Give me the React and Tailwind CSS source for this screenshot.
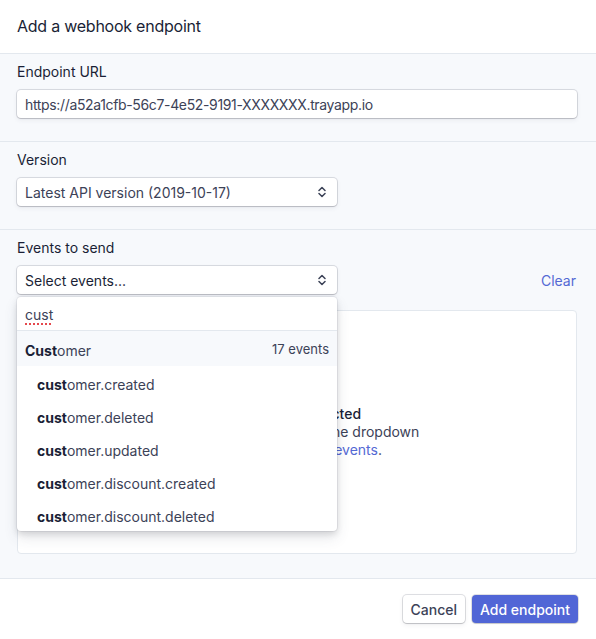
import React from "react";

const Chevrons = () => (
  <svg width="8" height="12" viewBox="0 0 8 12" fill="none" stroke="#3c4257" strokeWidth="1.5" strokeLinecap="round" strokeLinejoin="round">
    <path d="M1 4.5 L4 1.5 L7 4.5" />
    <path d="M1 7.5 L4 10.5 L7 7.5" />
  </svg>
);

const fieldShadow = "shadow-[0_0_0_1px_rgba(60,66,87,0.16),0_1px_1px_rgba(0,0,0,0.12),0_2px_5px_rgba(60,66,87,0.08)]";

export default function App() {
  const items = [
    "omer.created",
    "omer.deleted",
    "omer.updated",
    "omer.discount.created",
    "omer.discount.deleted",
  ];
  return (
    <div className="w-[596px] h-[639px] bg-white text-[#1a1f36] text-[14px] overflow-hidden relative" style={{ fontFamily: "Inter, 'Noto Sans', sans-serif" }}>
      <div className="h-[54px] border-b border-[#e3e8ee] flex items-center px-[17px]">
        <span className="text-[16px] leading-5 text-[#1a1f36] mb-[2px] tracking-[-0.015em]">Add a webhook endpoint</span>
      </div>

      <div className="bg-[#f7f9fc] border-b border-[#e3e8ee] pt-2 pb-[23px] px-[17px]">
        <div className="h-5 leading-5 text-[#1a1f36] mb-2">Endpoint URL</div>
        <div className={`h-7 w-[560px] bg-white rounded-[4px] ${fieldShadow} flex items-center px-2 text-[#3c4257] tracking-[-0.025em]`}>
          https://a52a1cfb-56c7-4e52-9191-XXXXXXX.trayapp.io
        </div>
      </div>

      <div className="bg-[#f7f9fc] border-b border-[#e3e8ee] pt-2 pb-[23px] px-[17px]">
        <div className="h-5 leading-5 text-[#1a1f36] mb-2">Version</div>
        <div className={`h-7 w-[320px] bg-white rounded-[4px] ${fieldShadow} flex items-center justify-between pl-2 pr-[11px] text-[#3c4257]`}>
          <span>Latest API version (2019-10-17)</span>
          <Chevrons />
        </div>
      </div>

      <div className="bg-[#f7f9fc] border-b border-[#e3e8ee] pt-2 pb-6 px-[17px] relative">
        <div className="h-5 leading-5 text-[#1a1f36] mb-2">Events to send</div>
        <div className="flex items-center justify-between w-[560px]">
          <div className={`h-7 w-[320px] bg-white rounded-[4px] ${fieldShadow} flex items-center justify-between pl-2 pr-[11px] text-[#1a1f36]`}>
            <span>Select events...</span>
            <Chevrons />
          </div>
          <span className="text-[#5469d4] mr-px">Clear</span>
        </div>
        <div className="mt-4 h-[244px] w-[560px] bg-white border border-[#e3e8ee] rounded-[4px] flex flex-col items-center justify-center text-[#3c4257] leading-[18px] text-center">
          <div className="font-medium text-[#1a1f36]">No events selected</div>
          <div>Select the events from the dropdown</div>
          <div>
            or subscribe to all <span className="text-[#5469d4]">events</span>.
          </div>
        </div>

        <div className="absolute left-[17px] top-[67px] w-[320px] bg-white rounded-[4px] shadow-[0_0_0_1px_rgba(60,66,87,0.08),0_7px_14px_rgba(60,66,87,0.12),0_3px_6px_rgba(0,0,0,0.12)] overflow-hidden">
          <div className="h-[34px] border-b border-[#e3e8ee] flex items-center px-2 pt-[2px] text-[#3c4257]">
            <span className="underline decoration-dotted decoration-[#e5484d] decoration-2 underline-offset-[3px]">cust</span>
          </div>
          <div className="h-[35px] bg-[#f7f9fc] flex items-center justify-between px-2 pt-[3px]">
            <span className="text-[#3c4257]"><b className="font-bold text-[#1a1f36]">Cust</b>omer</span>
            <span className="text-[13px] text-[#3c4257]">17 events</span>
          </div>
          {items.map((t) => (
            <div key={t} className="h-[33px] flex items-center pl-5 pt-[4px] text-[#3c4257]">
              <span><b className="font-bold text-[#1a1f36]">cust</b>{t}</span>
            </div>
          ))}
        </div>
      </div>

      <div className="h-[60px] flex items-start justify-end gap-[7px] pt-4 px-[18px]">
        <button className={`h-7 px-2 rounded-[4px] bg-white ${fieldShadow} text-[#3c4257] font-medium`}>Cancel</button>
        <button className="h-7 px-2 rounded-[4px] bg-[#5166d6] text-white font-medium shadow-[0_0_0_1px_rgba(60,66,87,0.16),0_1px_1px_rgba(0,0,0,0.12)]">Add endpoint</button>
      </div>
    </div>
  );
}
